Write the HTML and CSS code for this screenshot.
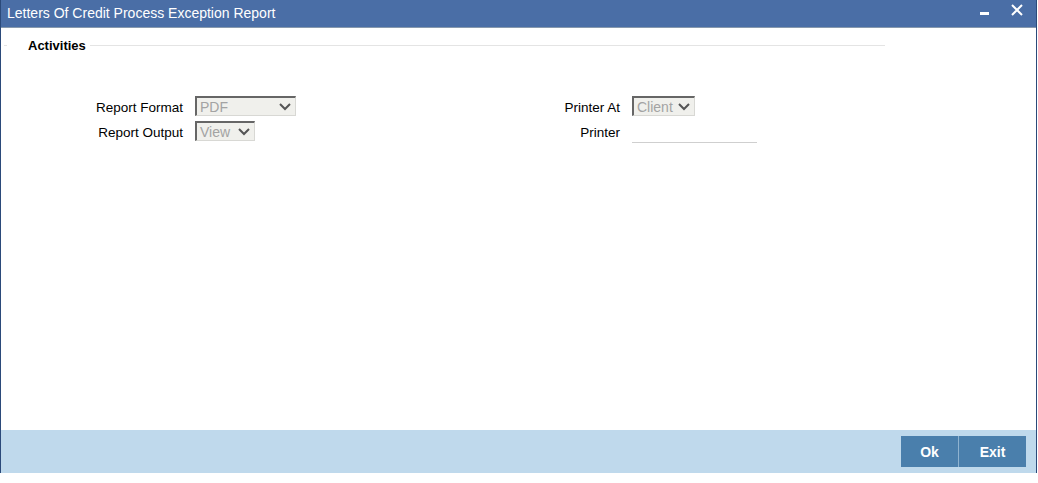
FILE: index.html
```html
<!DOCTYPE html>
<html>
<head>
<meta charset="utf-8">
<link rel="stylesheet" href="styles.css">
</head>
<body>
<div class="window">
  <div class="titlebar">
    <span class="title">Letters Of Credit Process Exception Report</span>
    <div class="controls">
      <svg class="ic-min" width="10" height="4" viewBox="0 0 10 4"><rect x="0" y="0" width="9" height="3" fill="#fff"/></svg>
      <svg class="ic-close" width="12" height="12" viewBox="0 0 12 12"><path d="M1 1 L11 11 M11 1 L1 11" stroke="#fff" stroke-width="2" fill="none"/></svg>
    </div>
  </div>
  <div class="body">
    <div class="legend">
      <span class="lline short"></span>
      <span class="ltext">Activities</span>
      <span class="lline long"></span>
    </div>
    <div class="form">
      <div class="col col-left">
        <label class="lbl">Report Format</label>
        <div class="select w-pdf"><span class="val">PDF</span><svg class="chev" width="12" height="8" viewBox="0 0 12 8"><path d="M1 1 L6 6 L11 1" stroke="#555" stroke-width="2" fill="none"/></svg></div>
        <label class="lbl">Report Output</label>
        <div class="select w-view"><span class="val">View</span><svg class="chev" width="12" height="8" viewBox="0 0 12 8"><path d="M1 1 L6 6 L11 1" stroke="#555" stroke-width="2" fill="none"/></svg></div>
      </div>
      <div class="col col-right">
        <label class="lbl">Printer At</label>
        <div class="select w-client"><span class="val">Client</span><svg class="chev" width="12" height="8" viewBox="0 0 12 8"><path d="M1 1 L6 6 L11 1" stroke="#555" stroke-width="2" fill="none"/></svg></div>
        <label class="lbl">Printer</label>
        <div class="textfield"></div>
      </div>
    </div>
  </div>
  <div class="footer">
    <button class="btn btn-ok">Ok</button>
    <button class="btn btn-exit">Exit</button>
  </div>
</div>
</body>
</html>
```
FILE: styles.css
```css
html, body {
  margin: 0;
  padding: 0;
  background: #ffffff;
  font-family: "Liberation Sans", Arial, sans-serif;
  font-size: 14px;
}
.window {
  width: 1035px;
  height: 473px;
  border-left: 1px solid #2b4a7a;
  border-right: 1px solid #2b4a7a;
  display: flex;
  flex-direction: column;
  box-sizing: content-box;
}
.titlebar {
  height: 27px;
  background: #4a6ea6;
  border-bottom: 1px solid #8799ad;
  display: flex;
  align-items: center;
  justify-content: space-between;
  color: #fff;
}
.title {
  padding-left: 6px;
  font-size: 14px;
  margin-top: -1px;
}
.controls {
  display: flex;
  align-items: flex-start;
  height: 27px;
  padding-right: 13px;
}
.ic-min {
  margin-top: 12px;
  margin-right: 21px;
}
.ic-close {
  margin-top: 4px;
}
.body {
  flex: 1;
}
.legend {
  display: flex;
  align-items: center;
  height: 16px;
  margin-top: 9px;
  width: 884px;
}
.lline {
  height: 1px;
  background: #e4e4e4;
}
.lline.short {
  width: 3px;
  margin-left: 3px;
  margin-right: 21px;
}
.lline.long {
  flex: 1;
  margin-left: 4px;
}
.ltext {
  font-weight: bold;
  font-size: 13px;
  color: #000;
}
.form {
  display: flex;
  margin-top: 43px;
}
.col {
  display: grid;
  grid-auto-rows: 20px;
  row-gap: 5px;
  column-gap: 12px;
  align-items: center;
}
.col-left {
  width: 436px;
  grid-template-columns: 182px auto;
}
.col-right {
  grid-template-columns: 183px auto;
}
.lbl {
  justify-self: end;
  color: #000;
  font-size: 13.5px;
  padding-top: 2px;
}
.select {
  height: 20px;
  box-sizing: border-box;
  border-top: 2px solid #666;
  border-left: 2px solid #666;
  border-right: 1px solid #d8d8d4;
  border-bottom: 1px solid #d8d8d4;
  background: #f0f0ec;
  display: flex;
  align-items: center;
  justify-content: space-between;
  padding: 0 4px 0 3px;
  color: #a3a3a3;
  font-size: 14px;
}
.w-pdf { width: 101px; }
.w-view { width: 60px; }
.w-client { width: 63px; }
.textfield {
  width: 125px;
  height: 22px;
  border-bottom: 1px solid #cfcfcf;
  box-sizing: border-box;
  align-self: start;
}
.footer {
  height: 43px;
  background: #bfd9ec;
  display: flex;
  align-items: center;
  justify-content: flex-end;
  padding-right: 10px;
}
.btn {
  height: 31px;
  border: none;
  background: #4a7fac;
  color: #fff;
  font-family: "Liberation Sans", Arial, sans-serif;
  font-weight: bold;
  font-size: 14px;
  padding: 0;
  margin: 0;
}
.btn-ok { border-right: 1px solid #8fb3d0; width: 58px; }
.btn-exit { width: 67px; }
```
